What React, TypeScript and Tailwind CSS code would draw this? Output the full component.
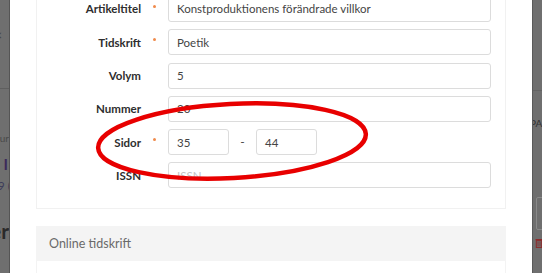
import React from 'react'

const font = {fontFamily: 'Lato, "Open Sans", sans-serif'}

type Row = {label: string; required?: boolean; value?: string; placeholder?: string}

const rows: Row[] = [
    {label: 'Artikeltitel', required: true, value: 'Konstproduktionens förändrade villkor'},
    {label: 'Tidskrift', required: true, value: 'Poetik'},
    {label: 'Volym', value: '5'},
    {label: 'Nummer', value: '20'},
]

function FieldInput({value, placeholder, className}: {value?: string; placeholder?: string; className?: string}) {
    return (
        <div
            className={
                'h-[26px] border border-[#dcdcdc] rounded-[3px] bg-white flex items-center px-[8px] text-[11.5px] ' +
                (className ?? '')
            }>
            {value ? (
                <span className="text-[#444]">{value}</span>
            ) : (
                <span className="text-[#c4c4c4]">{placeholder}</span>
            )}
        </div>
    )
}

function FormRow({label, required, children}: {label: string; required?: boolean; children: React.ReactNode}) {
    return (
        <div className="flex items-center h-[26px]">
            <div className="w-[104px] text-right text-[11.5px] font-bold text-[#2e2e2e]">{label}</div>
            <div className="w-[27px] flex justify-center">
                {required && <span className="block w-[3px] h-[3px] rounded-full bg-[#f08a4b] -mt-[4px]" />}
            </div>
            {children}
        </div>
    )
}

export default function App() {
    return (
        <div className="relative w-[542px] h-[273px] overflow-hidden flex bg-[#6f6f6f]" style={font}>
            {/* dimmed page on the left */}
            <div className="w-[10px] relative overflow-hidden text-[#3a3a3a] border-r border-[#555]">
                <div className="absolute right-[7px] top-[26px] text-[13px] text-[#444]">×</div>
                <div className="absolute left-0 right-0 top-[88px] h-px bg-[#5f5f5f]" />
                <div className="absolute right-0 top-[131px] text-[10px] whitespace-nowrap text-[#4a4a4a]">Jour</div>
                <div className="absolute right-[1px] top-[153px] text-[15px] font-bold whitespace-nowrap text-[#3c2a5a]">I</div>
                <div className="absolute right-[-2px] top-[177px] text-[12px] whitespace-nowrap text-[#3c3c5a]">9 (</div>
                <div className="absolute right-0 top-[215px] text-[21px] font-bold whitespace-nowrap text-[#2a2a2a]">Der</div>
            </div>

            {/* modal */}
            <div className="w-[522px] bg-white pl-[26px] pr-[26px]">
                <div className="border-x border-b border-[#f1f1f1] pr-[14px] pb-[20px] -mt-[4px] flex flex-col gap-[7.3px]">
                    {rows.map((r) => (
                        <FormRow key={r.label} label={r.label} required={r.required}>
                            <FieldInput value={r.value} className="flex-1" />
                        </FormRow>
                    ))}
                    <FormRow label="Sidor" required>
                        <FieldInput value="35" className="w-[61px]" />
                        <div className="w-[27px] text-center text-[12px] text-[#444]">-</div>
                        <FieldInput value="44" className="w-[61px]" />
                    </FormRow>
                    <FormRow label="ISSN">
                        <FieldInput placeholder="ISSN" className="flex-1" />
                    </FormRow>
                </div>
                <div className="mt-[17px] h-[35px] bg-[#f4f4f4] flex items-center pl-[13px] text-[12.5px] text-[#6a6a6a]">
                    Online tidskrift
                </div>
                <div className="h-[20px] border-x border-[#f3f3f3]" />
            </div>

            {/* dimmed page on the right */}
            <div className="flex-1 relative overflow-hidden border-l border-[#5a5a5a]">
                <div className="absolute left-0 right-0 top-[90px] h-px bg-[#636363]" />
                <div className="absolute left-[-3px] top-[116px] text-[10px] whitespace-nowrap text-[#333]">PA</div>
                <div className="absolute left-[3px] top-[197px] w-[20px] h-[33px] border border-[#8a8a8a] rounded-[2px]" />
                <svg className="absolute left-[2px] top-[238px]" width="8" height="10" viewBox="0 0 8 10">
                    <rect x="0.5" y="1" width="7" height="1.2" fill="#8b2a2a" />
                    <rect x="1.3" y="2.6" width="5.4" height="7" fill="none" stroke="#8b2a2a" strokeWidth="1" />
                    <line x1="3" y1="3.5" x2="3" y2="8.5" stroke="#8b2a2a" strokeWidth="0.8" />
                    <line x1="5" y1="3.5" x2="5" y2="8.5" stroke="#8b2a2a" strokeWidth="0.8" />
                </svg>
            </div>

            {/* hand-drawn highlight */}
            <svg className="absolute left-0 top-0 pointer-events-none" width="542" height="273">
                <ellipse
                    cx="232"
                    cy="141"
                    rx="134"
                    ry="37"
                    transform="rotate(-3 232 141)"
                    fill="none"
                    stroke="#e80000"
                    strokeWidth="4.5"
                />
            </svg>
        </div>
    )
}
